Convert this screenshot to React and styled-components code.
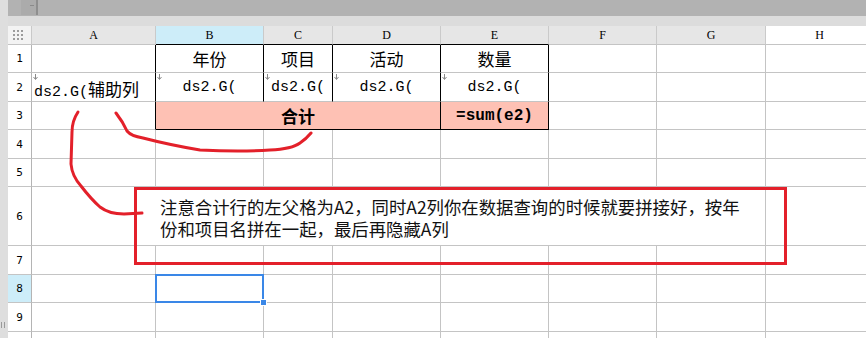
import React from "react";
import styled, { createGlobalStyle } from "styled-components";

const GlobalStyle = createGlobalStyle`
  html, body {
    margin: 0;
    padding: 0;
    background: #fff;
    overflow: hidden;
  }
  body {
    font-family: "Noto Sans CJK SC", sans-serif;
  }
`;

const COLUMNS = [
  { key: "A", width: 124 },
  { key: "B", width: 108, active: true },
  { key: "C", width: 69 },
  { key: "D", width: 108 },
  { key: "E", width: 108 },
  { key: "F", width: 108 },
  { key: "G", width: 109 },
  { key: "H", width: 108, hover: true },
];

const ROW_HEIGHTS = [28, 29, 28, 29, 28, 59, 29, 28, 29, 29];

// cells of the report; anything not listed is an empty grid cell
const CELLS = {
  B1: { text: "年份" },
  C1: { text: "项目" },
  D1: { text: "活动" },
  E1: { text: "数量" },
  A2: { text: "ds2.G(", tail: "辅助列", wrapped: "拼接)", align: "left", mark: true },
  B2: { text: "ds2.G(", mono: true, mark: true },
  C2: { text: "ds2.G(", mono: true, mark: true },
  D2: { text: "ds2.G(", mono: true, mark: true },
  E2: { text: "ds2.G(", mono: true, mark: true },
  B3: { text: "合计", span: 3, fill: true, bold: true },
  E3: { text: "=sum(e2)", mono: true, fill: true, bold: true },
  A6: { span: 7 },
  B8: { selected: true },
};

const BOXED_COLS = ["B", "C", "D", "E"];

const Page = styled.div`
  position: relative;
  display: flex;
  width: 866px;
  height: 338px;
  overflow: hidden;
  background: #fff;
`;

const LeftEdge = styled.div`
  width: 8px;
  flex: none;
  background: #dedede;
  display: flex;
  flex-direction: column;
  justify-content: flex-end;
  padding-bottom: 10px;
  box-sizing: border-box;
`;

const Grip = styled.div`
  width: 2px;
  height: 6px;
  margin-left: 1px;
  border-left: 1px solid #9a9a9a;
  border-right: 1px solid #9a9a9a;
`;

const Main = styled.div`
  flex: 1;
  min-width: 0;
  display: flex;
  flex-direction: column;
`;

const TopBar = styled.div`
  height: 16px;
  flex: none;
  background: #b2b2b2;
  display: flex;
  padding-left: 13px;
`;

const TopTab = styled.div`
  position: relative;
  width: 15px;
  height: 15px;
  background: #ababab;
  border-right: 2px solid #8e8e8e;

  &::after {
    content: "";
    position: absolute;
    right: 2px;
    top: 5px;
    width: 4px;
    height: 1px;
    background: #8a8a8a;
  }
`;

const SubBar = styled.div`
  height: 10px;
  flex: none;
  background: #dcdcdc;
`;

const Sheet = styled.div`
  position: relative;
  display: grid;
  grid-template-columns: 24px ${COLUMNS.map((c) => `${c.width}px`).join(" ")};
  grid-template-rows: 19px ${ROW_HEIGHTS.map((h) => `${h}px`).join(" ")};
`;

const Corner = styled.div`
  box-sizing: border-box;
  background: #f3f3f3;
  border-right: 1px solid #c9c9c9;
  border-bottom: 1px solid #c4c4c4;
  display: grid;
  grid-template-columns: repeat(3, 2px);
  grid-auto-rows: 2px;
  gap: 2px;
  align-content: center;
  padding-left: 5px;
`;

const Dot = styled.span`
  background: #9c9c9c;
`;

const ColHead = styled.div`
  box-sizing: border-box;
  background: ${(p) => (p.$active ? "#cdedf9" : p.$hover ? "#fff" : "#e6e6e6")};
  border-right: 1px solid #cacaca;
  border-bottom: 1px solid ${(p) => (p.$dark ? "#000" : "#c4c4c4")};
  display: flex;
  align-items: center;
  justify-content: center;
  font-family: "Liberation Serif", serif;
  font-size: 12px;
  color: #000;
`;

const RowHead = styled.div`
  box-sizing: border-box;
  background: ${(p) => (p.$active ? "#cdedf9" : "#fff")};
  border-right: 1px solid #b4b4b4;
  border-bottom: 1px solid #c4c4c4;
  display: flex;
  align-items: center;
  justify-content: center;
  font-family: "DejaVu Sans Mono", monospace;
  font-size: 11px;
  color: #000;
`;

const Cell = styled.div`
  position: relative;
  z-index: ${(p) => (p.$selected ? 1 : "auto")};
  box-sizing: border-box;
  grid-column: span ${(p) => p.$span};
  border-right: 1px solid ${(p) => (p.$darkRight ? "#000" : "#c4c4c4")};
  border-bottom: 1px solid ${(p) => (p.$darkBottom ? "#000" : "#c4c4c4")};
  background: ${(p) => (p.$fill ? "#fec1b4" : "#fff")};
  display: flex;
  align-items: center;
  justify-content: ${(p) => (p.$align === "left" ? "flex-start" : "center")};
  padding: 0 2px;
  overflow: ${(p) => (p.$selected ? "visible" : "hidden")};
  white-space: nowrap;
  color: #000;
  font-weight: ${(p) => (p.$bold ? 700 : 400)};
  font-family: ${(p) =>
    p.$mono
      ? `"Liberation Mono", "Noto Sans CJK SC", monospace`
      : `"Noto Sans CJK SC", sans-serif`};
  font-size: ${(p) => (p.$mono ? (p.$bold ? "16px" : "15px") : "17px")};
`;

const Wrapped = styled.div`
  align-self: flex-start;
  padding-top: 6px;
  line-height: 19px;
`;

const Mono = styled.span`
  font-family: "Liberation Mono", monospace;
  font-size: 15px;
`;

const FilterMark = styled.svg`
  position: absolute;
  top: 1px;
  left: 1px;
  width: 5px;
  height: 6px;
`;

const Selection = styled.div`
  position: absolute;
  top: -1px;
  left: -1px;
  right: -1px;
  bottom: -1px;
  border: 2px solid #3a87e7;
  pointer-events: none;
`;

const Handle = styled.div`
  position: absolute;
  right: -5px;
  bottom: -5px;
  width: 5px;
  height: 5px;
  background: #3a87e7;
  border: 1px solid #fff;
`;

const Callout = styled.div`
  position: absolute;
  left: 126px;
  top: 161px;
  width: 653px;
  height: 78px;
  box-sizing: border-box;
  border: 3px solid #e3202a;
  padding: 6px 0 0 23px;
  font-family: "Noto Sans CJK SC", sans-serif;
  font-size: 17.4px;
  line-height: 22px;
  color: #111;
`;

const CalloutLine = styled.div`
  white-space: nowrap;
`;

const Scribble = styled.svg`
  position: absolute;
  left: 0;
  top: 0;
  width: 866px;
  height: 338px;
  pointer-events: none;
`;

const NOTE = [
  "注意合计行的左父格为A2，同时A2列你在数据查询的时候就要拼接好，按年",
  "份和项目名拼在一起，最后再隐藏A列",
];

function renderCell(col, row, colIndex) {
  const id = `${col.key}${row}`;
  const spec = CELLS[id] || {};
  const span = spec.span || 1;
  const lastKey = COLUMNS[colIndex + span - 1].key;
  const inBox = row <= 3 && BOXED_COLS.includes(lastKey);
  const darkRight = row <= 3 && (inBox || lastKey === "A");
  const darkBottom = row === 3 && BOXED_COLS.includes(col.key);

  return (
    <Cell
      key={id}
      $span={span}
      $darkRight={darkRight}
      $darkBottom={darkBottom}
      $fill={spec.fill}
      $bold={spec.bold}
      $mono={spec.mono}
      $align={spec.align}
      $selected={spec.selected}
    >
      {spec.mark && (
        <FilterMark viewBox="0 0 5 6">
          <path d="M2.5 0 V5 M0.5 3 L2.5 5.5 L4.5 3" stroke="#8a8a8a" strokeWidth="1" fill="none" />
        </FilterMark>
      )}
      {spec.wrapped ? (
        <Wrapped>
          <div>
            <Mono>{spec.text}</Mono>
            {spec.tail}
          </div>
          <div>{spec.wrapped}</div>
        </Wrapped>
      ) : (
        spec.text
      )}
      {spec.selected && (
        <Selection>
          <Handle />
        </Selection>
      )}
    </Cell>
  );
}

function isCovered(col, row) {
  // cells hidden by a merge to their left
  for (const [id, spec] of Object.entries(CELLS)) {
    if (!spec.span) continue;
    const startIdx = COLUMNS.findIndex((c) => c.key === id[0]);
    const r = Number(id.slice(1));
    const idx = COLUMNS.findIndex((c) => c.key === col);
    if (r === row && idx > startIdx && idx < startIdx + spec.span) return true;
  }
  return false;
}

export default function App() {
  return (
    <>
      <GlobalStyle />
      <Page>
        <LeftEdge>
          <Grip />
        </LeftEdge>
        <Main>
          <TopBar>
            <TopTab />
          </TopBar>
          <SubBar />
          <Sheet>
            <Corner>
              {Array.from({ length: 9 }).map((_, i) => (
                <Dot key={i} />
              ))}
            </Corner>
            {COLUMNS.map((c) => (
              <ColHead
                key={c.key}
                $active={c.active}
                $hover={c.hover}
                $dark={BOXED_COLS.includes(c.key)}
              >
                {c.key}
              </ColHead>
            ))}
            {ROW_HEIGHTS.map((_, i) => {
              const row = i + 1;
              return (
                <React.Fragment key={row}>
                  <RowHead $active={row === 8}>{row}</RowHead>
                  {COLUMNS.map((c, ci) =>
                    isCovered(c.key, row) ? null : renderCell(c, row, ci)
                  )}
                </React.Fragment>
              );
            })}
            <Callout>
              {NOTE.map((line) => (
                <CalloutLine key={line}>{line}</CalloutLine>
              ))}
            </Callout>
          </Sheet>
        </Main>
        <Scribble viewBox="0 0 866 338">
          <g stroke="#e3202a" strokeWidth="3" fill="none" strokeLinecap="round" strokeLinejoin="round">
            <path d="M78 112 Q72 121 72 132 L71 164 Q72 176 81 186 Q91 199 100 207 Q109 214 124 214 L142 213" />
            <path d="M116 113 Q123 122 127 131 Q131 136 143 138 Q170 145 200 150 Q240 152 270 150 Q292 149 300 143 Q306 139 311 133" />
          </g>
        </Scribble>
      </Page>
    </>
  );
}
